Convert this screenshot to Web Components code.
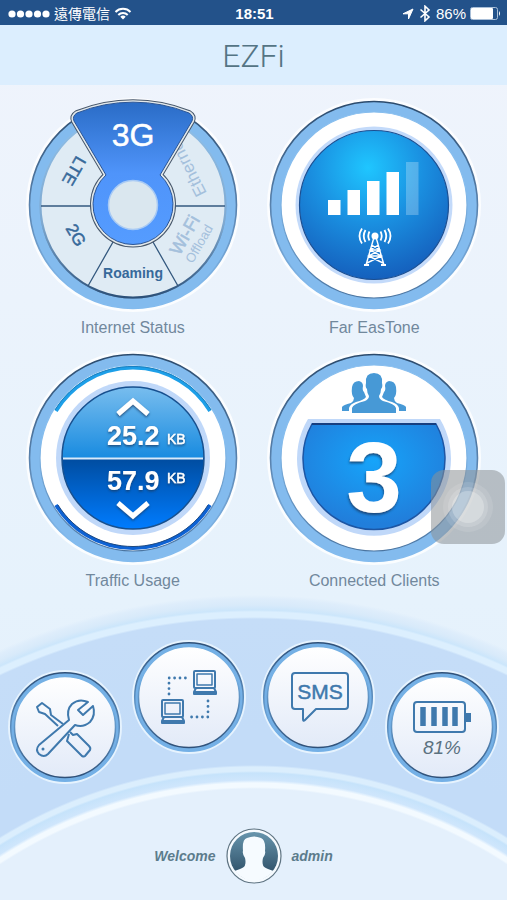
<!DOCTYPE html>
<html lang="en">
<head>
<meta charset="utf-8">
<meta name="viewport" content="width=device-width, initial-scale=1">
<title>EZFi</title>
<style>
  body {
    margin: 0;
    font-family: "Liberation Sans", "Noto Sans CJK TC", sans-serif;
    background: linear-gradient(#f0f4fc, #e6f2fc 600px, #e2effc);
  }
</style>
</head>
<body>
<ez-app>
  <ez-status-bar slot="top" carrier="遠傳電信" time="18:51" battery="86"></ez-status-bar>
  <ez-header slot="top">EZFi</ez-header>

  <ez-dial label="Internet Status"><ez-network-face></ez-network-face></ez-dial>
  <ez-dial label="Far EasTone"><ez-signal-face level="4"></ez-signal-face></ez-dial>
  <ez-dial label="Traffic Usage"><ez-traffic-face up="25.2" down="57.9"></ez-traffic-face></ez-dial>
  <ez-dial label="Connected Clients"><ez-clients-face count="3"></ez-clients-face></ez-dial>

  <ez-dock slot="bottom">
    <ez-dock-button icon="tools" label="Settings"></ez-dock-button>
    <ez-dock-button icon="computers" label="Devices"></ez-dock-button>
    <ez-dock-button icon="sms" label="SMS"></ez-dock-button>
    <ez-dock-button icon="battery" label="Battery"></ez-dock-button>
    <ez-user slot="user" name="admin"></ez-user>
  </ez-dock>
</ez-app>
<ez-assistive-touch></ez-assistive-touch>

<script>
// Small base class: every element stamps its render() output once.
class EzElement extends HTMLElement {
  constructor() {
    super();
    this.attachShadow({ mode: 'open' });
  }

  connectedCallback() {
    if(!this.shadowRoot.firstChild) {
      let template = document.createElement('template');
      template.innerHTML = this.render();
      this.shadowRoot.appendChild(document.importNode(template.content, true));
    }
  }

  attr(name) {
    return this.getAttribute(name) || '';
  }
}

class EzApp extends EzElement {
  render() {
    return /* html */ `
      <style>
        :host {
          display: flex;
          flex-direction: column;
          min-height: 100vh;
        }

        main {
          display: grid;
          grid-template-columns: 1fr 1fr;
          row-gap: 10px;
          padding: 12px 12px 0;
        }

        .bottom {
          display: flex;
          flex: 1;
        }
      </style>
      <slot name="top"></slot>
      <main><slot></slot></main>
      <div class="bottom"><slot name="bottom"></slot></div>
    `;
  }
}
customElements.define('ez-app', EzApp);

class EzStatusBar extends EzElement {
  render() {
    return /* html */ `
      <style>
        :host {
          display: grid;
          grid-template-columns: 1fr auto 1fr;
          align-items: center;
          height: 25px;
          padding: 2px 6px 0 8px;
          box-sizing: border-box;
          background: #23528a;
          color: #fff;
          font-size: 15px;
          line-height: 20px;
        }

        .side {
          display: flex;
          align-items: center;
          gap: 4px;
        }

        .end {
          justify-content: flex-end;
        }

        .carrier {
          font-size: 14px;
        }

        time {
          font-weight: bold;
        }

        svg {
          display: block;
        }
      </style>
      <div class="side">
        <svg width="42" height="8" fill="#fff" aria-hidden="true">
          <circle cx="4" cy="4" r="3.6"/><circle cx="12.5" cy="4" r="3.6"/><circle cx="21" cy="4" r="3.6"/><circle cx="29.5" cy="4" r="3.6"/><circle cx="38" cy="4" r="3.6"/>
        </svg>
        <span class="carrier">${this.attr('carrier')}</span>
        <svg width="18" height="13" viewBox="0 0 18 13" fill="none" stroke="#fff" stroke-width="2" aria-hidden="true">
          <path d="M1.5 5A10.5 10.5 0 0 1 16.5 5M4.3 8A6.6 6.6 0 0 1 13.7 8"/>
          <path d="M9 12.5L6.3 9.8A3.9 3.9 0 0 1 11.7 9.8Z" fill="#fff" stroke="none"/>
        </svg>
      </div>
      <time>${this.attr('time')}</time>
      <div class="side end">
        <svg width="12" height="12" viewBox="0 0 12 12" fill="#fff" stroke="#fff" aria-hidden="true"><path d="M11 1L6.5 11V5.8H1Z"/></svg>
        <svg width="14" height="17" viewBox="0 0 14 17" fill="none" stroke="#fff" stroke-width="1.6" aria-hidden="true"><path d="M2.5 4.5L11 12L7 15.8V1.2L11 5L2.5 12.5"/></svg>
        <span>${this.attr('battery')}%</span>
        <svg width="31" height="13" viewBox="0 0 31 13" aria-hidden="true">
          <rect x=".5" y=".5" width="27" height="12" rx="2" fill="none" stroke="#a9bfd8"/>
          <rect x="1" y="1" width="22" height="11" rx="1" fill="#fff"/>
          <path d="M29 4Q31 6.5 29 9Z" fill="#fff"/>
        </svg>
      </div>
    `;
  }
}
customElements.define('ez-status-bar', EzStatusBar);

class EzHeader extends EzElement {
  render() {
    return /* html */ `
      <style>
        :host {
          display: block;
          padding: 10px 0;
          background: #dceefe;
          text-align: center;
        }

        h1 {
          margin: 0;
          font: 300 32px/42px Roboto, "Liberation Sans", sans-serif;
          color: #547484;
        }

        h1 {
          height: 40px;
        }
      </style>
      <h1><slot></slot></h1>
    `;
  }
}
customElements.define('ez-header', EzHeader);

// Round button frame. The face is slotted on top of the ring.
class EzDial extends EzElement {
  render() {
    return /* html */ `
      <style>
        :host {
          display: block;
        }

        button {
          display: flex;
          flex-direction: column;
          align-items: center;
          gap: 3px;
          width: 100%;
          padding: 0;
          border: 0;
          background: none;
          font: inherit;
          cursor: pointer;
        }

        .frame {
          display: grid;
        }

        .frame > * {
          grid-area: 1 / 1;
        }

        svg {
          display: block;
        }

        .label {
          font-size: 16px;
          line-height: 24px;
          color: #71889c;
        }
      </style>
      <button type="button">
        <span class="frame">
          <svg width="216" height="216" viewBox="-108 -108 216 216" aria-hidden="true">
            <defs>
              <linearGradient id="edge" x1="0" y1="0" x2="0" y2="1">
                <stop offset="0" stop-color="#2b4a6c"/>
                <stop offset=".55" stop-color="#5d87b3"/>
                <stop offset=".9" stop-color="#83bbee"/>
              </linearGradient>
              <linearGradient id="inner" x1="0" y1="0" x2="0" y2="1">
                <stop offset=".4" stop-color="#86bdee"/>
                <stop offset="1" stop-color="#4a74a0"/>
              </linearGradient>
            </defs>
            <circle r="107" fill="#fff" opacity=".8"/>
            <circle r="103.5" fill="#83bbee" stroke="url(#edge)" stroke-width="1.6"/>
            <circle r="93" fill="#fff" stroke="url(#inner)" stroke-width="1.2"/>
          </svg>
          <span><slot></slot></span>
        </span>
        <span class="label">${this.attr('label')}</span>
      </button>
    `;
  }
}
customElements.define('ez-dial', EzDial);

const faceStyle = /* html */ `
  <style>
    :host {
      display: block;
    }

    svg {
      display: block;
      font-family: "Liberation Sans", sans-serif;
    }
  </style>
`;

const pointer = 'M-27 -30L-59 -84Q-61 -89 -56 -92A150 150 0 0 1 56 -92Q61 -89 59 -84L27 -30A40 40 0 1 1 -27 -30Z';

class EzNetworkFace extends EzElement {
  render() {
    return /* html */ `
      ${faceStyle}
      <svg width="216" height="216" viewBox="-108 -108 216 216">
        <defs>
          <linearGradient id="wedge" x1="0" y1="0" x2="0" y2="1">
            <stop offset="0" stop-color="#2a6cc6"/>
            <stop offset=".5" stop-color="#4f94fa"/>
            <stop offset="1" stop-color="#559cff"/>
          </linearGradient>
          <linearGradient id="rim" x1="0" y1="0" x2="0" y2="1">
            <stop offset="0" stop-color="#8fbfe8"/>
            <stop offset=".6" stop-color="#7fa9d0"/>
            <stop offset="1" stop-color="#2c5078"/>
          </linearGradient>
        </defs>
        <circle r="92.5" fill="#dfebf4" stroke="url(#rim)" stroke-width="2"/>
        <path d="M-92 1H92M-20 37L-45 81M20 37L45 81" stroke="#34597f" stroke-width="1.3"/>
        <g fill="#37699a" stroke="#37699a" stroke-width=".5" text-anchor="middle">
          <text transform="translate(-64 -37) rotate(120)" font-size="17">LTE</text>
          <text transform="translate(-62 33) rotate(60)" font-size="17">2G</text>
          <text y="73" font-size="14" font-weight="bold" stroke="none">Roaming</text>
        </g>
        <g fill="#a4c0dc">
          <text transform="translate(74 -12) rotate(-117)" font-size="17">Ethernet</text>
          <text transform="translate(57 33) rotate(-60)" font-size="18" stroke="#a4c0dc" stroke-width=".5" text-anchor="middle">Wi-Fi</text>
          <text transform="translate(70 41) rotate(-60)" font-size="13" text-anchor="middle">Offload</text>
        </g>
        <g stroke-linejoin="round">
          <path d="${pointer}" fill="none" stroke="#46566a" stroke-width="6"/>
          <path d="${pointer}" fill="none" stroke="#e2e8ea" stroke-width="4"/>
          <path d="${pointer}" fill="url(#wedge)" stroke="#2a5596" stroke-width="1"/>
        </g>
        <circle r="24.5" fill="#dae7ef" stroke="#a8caf4" stroke-width="1.5"/>
        <text y="-59" font-size="32" fill="#fff" stroke="#fff" stroke-width=".5" text-anchor="middle">3G</text>
      </svg>
    `;
  }
}
customElements.define('ez-network-face', EzNetworkFace);

class EzSignalFace extends EzElement {
  render() {
    let level = Number(this.attr('level'));
    let bars = [15, 25, 34, 43, 53].map((h, i) =>
      `<rect x="${-46 + i * 19.5}" y="${10 - h}" width="12.5" height="${h}" opacity="${i < level ? 1 : .25}"/>`
    ).join('');
    return /* html */ `
      ${faceStyle}
      <svg width="216" height="216" viewBox="-108 -108 216 216" role="img" aria-label="Signal ${level} of 5">
        <defs>
          <radialGradient id="disc" cx=".46" cy=".25" r=".75">
            <stop offset="0" stop-color="#1fc6ff"/>
            <stop offset=".5" stop-color="#1a8fe0"/>
            <stop offset="1" stop-color="#1560bd"/>
          </radialGradient>
        </defs>
        <circle r="78.5" fill="#c3dafa"/>
        <circle r="74.5" fill="url(#disc)" stroke="#1b4f92" stroke-width="1.2"/>
        <g fill="#fff">${bars}</g>
        <g transform="translate(1 0)" fill="none" stroke="#fff" stroke-width="1.8">
          <circle cy="31" r="3.5" fill="#fff" stroke="none"/>
          <path d="M-1.5 34L-9 60M1.5 34L9 60M-3.5 40L5 45L-6.5 51L8 58M3.5 40L-5 45L6.5 51L-8 58M-5 45H5M-6.5 51H6.5" stroke-width="1.4"/>
          <path d="M-11 60H-6M6 60H11"/>
          <path d="M-5.5 35.5Q-8 31 -5.5 26.5M-9.5 37Q-13 31 -9.5 25M-13 38.5Q-18 31 -13 23.5M5.5 35.5Q8 31 5.5 26.5M9.5 37Q13 31 9.5 25M13 38.5Q18 31 13 23.5"/>
        </g>
      </svg>
    `;
  }
}
customElements.define('ez-signal-face', EzSignalFace);

class EzTrafficFace extends EzElement {
  render() {
    return /* html */ `
      ${faceStyle}
      <svg width="216" height="216" viewBox="-108 -108 216 216">
        <defs>
          <linearGradient id="up" x1="0" y1="0" x2="0" y2="1">
            <stop offset="0" stop-color="#78bdee"/>
            <stop offset="1" stop-color="#188be0"/>
          </linearGradient>
          <linearGradient id="down" x1="0" y1="0" x2="0" y2="1">
            <stop offset="0" stop-color="#004c9f"/>
            <stop offset="1" stop-color="#007cff"/>
          </linearGradient>
          <filter id="drop" x="-20%" y="-20%" width="140%" height="150%">
            <feDropShadow dx="0" dy="1.5" stdDeviation=".8" flood-color="#123a66" flood-opacity=".8"/>
          </filter>
        </defs>
        <g fill="none">
          <path d="M-77 -47A90.2 90.2 0 0 1 77 -47" stroke="#1d9fe8" stroke-width="3.6"/>
          <path d="M-78 -48A91.6 91.6 0 0 1 78 -48" stroke="#1b7fc0"/>
          <path d="M-77 47A90.2 90.2 0 0 0 77 47" stroke="#0d62d4" stroke-width="3.6"/>
          <path d="M-75 47A88.5 88.5 0 0 0 75 47" stroke="#1f4a80"/>
        </g>
        <circle r="77" fill="#c0d8f9"/>
        <path d="M-71 0A71 71 0 0 1 71 0Z" fill="url(#up)"/>
        <path d="M-71 0A71 71 0 0 0 71 0Z" fill="url(#down)"/>
        <circle r="71" fill="none" stroke="#17508f" stroke-width="1.5"/>
        <path d="M-70 .5H70" stroke="#d8eafa" stroke-width="2"/>
        <g fill="none" stroke="#fff" stroke-width="5" filter="url(#drop)">
          <path d="M-15 -44L0 -57L15 -44"/>
          <path d="M-15 45L0 58L15 45"/>
        </g>
        <g fill="#fff" filter="url(#drop)">
          <text x="-26" y="-13" font-size="27" font-weight="bold">${this.attr('up')}</text>
          <text x="34" y="-14" font-size="14" stroke="#fff" stroke-width=".4">KB</text>
          <text x="-26" y="32" font-size="27" font-weight="bold">${this.attr('down')}</text>
          <text x="34" y="25" font-size="14" stroke="#fff" stroke-width=".4">KB</text>
        </g>
      </svg>
    `;
  }
}
customElements.define('ez-traffic-face', EzTrafficFace);

class EzClientsFace extends EzElement {
  render() {
    return /* html */ `
      ${faceStyle}
      <svg width="216" height="216" viewBox="-108 -108 216 216">
        <defs>
          <radialGradient id="bowl" cx=".5" cy=".35" r=".6">
            <stop offset="0" stop-color="#16a4fa"/>
            <stop offset="1" stop-color="#217edb"/>
          </radialGradient>
          <filter id="drop" x="-20%" y="-20%" width="140%" height="150%">
            <feDropShadow dx="-.5" dy="2" stdDeviation=".8" flood-color="#123a66" flood-opacity=".8"/>
          </filter>
        </defs>
        <path d="M-66 -39H66A77 77 0 1 1 -66 -39Z" fill="#c0d8f9"/>
        <path d="M-62 -34H62A71 71 0 1 1 -62 -34Z" fill="url(#bowl)" stroke="#1d56a4" stroke-width="1.5"/>
        <path d="M-62 -34H62" stroke="#173f80" stroke-width="2"/>
        <g fill="#4799d6">
          <path d="M-22 -45V-50Q-21 -54 -9 -57Q-5 -59 -5 -62Q-7 -65 -7 -69Q-9 -71 -8 -75Q-9 -85 0 -85Q9 -85 8 -75Q9 -71 7 -69Q7 -65 5 -62Q5 -59 9 -57Q21 -54 22 -50V-45Z"/>
          <path id="side" d="M-32 -47V-51Q-31 -53 -23 -55Q-20 -57 -20 -60Q-23 -63 -22 -71Q-21 -77 -15 -77Q-11 -76 -11 -72Q-12 -68 -10 -66L-8 -61Q-10 -58 -18 -56Q-24 -54 -25 -50V-47Z"/>
          <use href="#side" transform="scale(-1 1)"/>
        </g>
        <text y="54" font-size="100" font-weight="bold" fill="#fff" text-anchor="middle" filter="url(#drop)">${this.attr('count')}</text>
      </svg>
    `;
  }
}
customElements.define('ez-clients-face', EzClientsFace);

// Curved shelf drawn with two big circles, buttons follow the curve.
class EzDock extends EzElement {
  render() {
    return /* html */ `
      <style>
        :host {
          display: flex;
          flex: 1;
          flex-direction: column;
          padding: 47px 8px 16px;
          background:
            radial-gradient(circle at 50% 657px,
              #e4f0fc 461px, #f3faff 463px, #f3faff 467px, #cfe6fc 470px,
              #c6e3fb 477px, #dbeefd 479px, #dbeefd 483px, transparent 485px),
            radial-gradient(circle at 50% 618px,
              #c3dcf8 480px, #c5ddf8 592px, #dceffe 594px, #dceffe 599px, #cce6fb 601px,
              #d8eafa 606px, #deedfb 612px, transparent 616px);
        }

        nav {
          display: flex;
          gap: 10px;
          align-items: flex-start;
        }

        ::slotted(ez-dock-button:first-of-type),
        ::slotted(ez-dock-button:nth-of-type(4)) {
          margin-top: 30px;
        }

        ::slotted(ez-dock-button:nth-of-type(2)) {
          margin-right: auto;
        }

        footer {
          margin-top: auto;
        }
      </style>
      <nav><slot></slot></nav>
      <footer><slot name="user"></slot></footer>
    `;
  }
}
customElements.define('ez-dock', EzDock);

const icons = {
  tools: /* html */ `
    <path d="M23 -25Q14 -29 7 -23Q1 -17 4 -7L-26 18Q-30 23 -26 27Q-21 31 -17 27L10 -2Q18 1 25 -5Q31 -12 28 -21L18 -12L13 -17Z"/>
    <circle cx="-22" cy="22" r="1.5" fill="#3f79ad" stroke="none"/>
    <path d="M-7 -1L-20 -13L-26 -15L-28 -20L-23 -24L-15 -18L-14 -12L-2 -3"/>
    <path d="M4 7L2 14L17 29Q19 30 20 29L25 23Q26 21 24 19L12 7L8 8L5 5"/>
  `,
  computers: /* html */ `
    <rect x="5" y="-26" width="21" height="17" rx="1"/>
    <rect x="8" y="-23" width="15" height="11" stroke-width="1.5"/>
    <path d="M7 -9L5 -5V-3H27V-5L25 -9M5 -5H27"/>
    <rect x="-27" y="3" width="21" height="17" rx="1"/>
    <rect x="-24" y="6" width="15" height="11" stroke-width="1.5"/>
    <path d="M-25 20L-27 24V26H-5V24L-7 20M-27 24H-5"/>
    <path d="M-20 -3V-19H-3M19 4V20H1" stroke-width="2.8" stroke-linecap="round" stroke-dasharray="0 5.4"/>
  `,
  sms: /* html */ `
    <path d="M-23 -24H27Q30 -24 30 -21V9Q30 12 27 12H-2L-13 23Q-15 25 -15 22V12H-23Q-26 12 -26 9V-21Q-26 -24 -23 -24Z"/>
    <text x="2" y="2" font-size="21" fill="#3f79ad" stroke-width=".5" text-anchor="middle">SMS</text>
  `,
  battery: /* html */ `
    <rect x="-28" y="-25" width="51" height="30" rx="3"/>
    <path d="M24 -14H29V-5H24Z" fill="#3f79ad" stroke="none"/>
    <path d="M-19 -20V-1M-8 -20V-1M3 -20V-1M13 -20V-1" stroke-width="5.5"/>
    <text y="27" font-size="19" font-style="italic" fill="#5b7180" stroke="none" text-anchor="middle">81%</text>
  `
};

class EzDockButton extends EzElement {
  render() {
    return /* html */ `
      <style>
        :host {
          display: block;
        }

        button {
          display: block;
          padding: 0;
          border: 0;
          background: none;
          cursor: pointer;
        }

        svg {
          display: block;
          font-family: "Liberation Sans", sans-serif;
        }
      </style>
      <button type="button" aria-label="${this.attr('label')}">
        <svg width="114" height="114" viewBox="-57 -57 114 114">
          <defs>
            <linearGradient id="edge" x1="0" y1="0" x2="0" y2="1">
              <stop offset="0" stop-color="#2f5078"/>
              <stop offset=".8" stop-color="#74b0e6"/>
            </linearGradient>
            <linearGradient id="inner" x1="0" y1="0" x2="0" y2="1">
              <stop offset=".3" stop-color="#74b0e4"/>
              <stop offset="1" stop-color="#2f5078"/>
            </linearGradient>
            <linearGradient id="fill" x1="0" y1="0" x2="0" y2="1">
              <stop offset="0" stop-color="#fff"/>
              <stop offset="1" stop-color="#e2eaf8"/>
            </linearGradient>
          </defs>
          <circle r="57" fill="#e6f3fe"/>
          <circle r="54.3" fill="#74b0e6" stroke="url(#edge)" stroke-width="1.5"/>
          <circle r="50.5" fill="url(#fill)" stroke="url(#inner)" stroke-width="1.5"/>
          <g fill="none" stroke="#3f79ad" stroke-width="2" stroke-linejoin="round">${icons[this.attr('icon')]}</g>
        </svg>
      </button>
    `;
  }
}
customElements.define('ez-dock-button', EzDockButton);

class EzUser extends EzElement {
  render() {
    return /* html */ `
      <style>
        :host {
          display: grid;
          grid-template-columns: 1fr auto 1fr;
          align-items: center;
          gap: 10px;
          font: italic bold 14px/20px "Liberation Sans", sans-serif;
          color: #5c7c8c;
        }

        .hello {
          text-align: right;
        }

        svg {
          display: block;
        }
      </style>
      <span class="hello">Welcome</span>
      <svg width="56" height="56" viewBox="-28 -28 56 56" aria-hidden="true">
        <defs>
          <linearGradient id="photo" x1="0" y1="0" x2="0" y2="1">
            <stop offset="0" stop-color="#6795ad"/>
            <stop offset="1" stop-color="#27475f"/>
          </linearGradient>
          <clipPath id="clip"><circle r="24.5"/></clipPath>
        </defs>
        <circle r="27" fill="#f6fbff" stroke="#5f7482" stroke-width="1.2"/>
        <circle r="24" fill="url(#photo)"/>
        <path clip-path="url(#clip)" d="M-26 26V18Q-20 15 -14 13Q-9 11 -9 9Q-8 6 -9 2Q-12 -3 -11 -5Q-12 -17 -7 -18Q0 -21 7 -18Q12 -16 11 -5Q12 -2 9 2Q8 6 9 9Q9 11 14 13Q20 15 26 18V26Z" fill="#f6fbff"/>
      </svg>
      <span>${this.attr('name')}</span>
    `;
  }
}
customElements.define('ez-user', EzUser);

// Floating system button, sits above the page.
class EzAssistiveTouch extends EzElement {
  render() {
    return /* html */ `
      <style>
        :host {
          position: fixed;
          top: 470px;
          right: 2px;
        }

        button {
          display: grid;
          place-items: center;
          width: 74px;
          height: 74px;
          padding: 0;
          border: 0;
          border-radius: 13px;
          background: rgba(140, 145, 150, .55);
        }
      </style>
      <button type="button" aria-label="AssistiveTouch">
        <svg width="54" height="54" viewBox="-27 -27 54 54" fill="#fff" aria-hidden="true">
          <circle r="25" opacity=".1"/><circle r="20" opacity=".15"/><circle r="16" opacity=".25"/>
        </svg>
      </button>
    `;
  }
}
customElements.define('ez-assistive-touch', EzAssistiveTouch);
</script>
</body>
</html>
